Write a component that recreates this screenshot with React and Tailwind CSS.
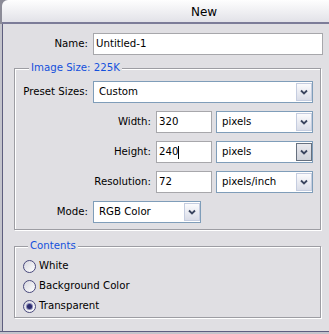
import React from 'react';

const Chevron = () => (
  <svg width="8" height="6" viewBox="0 0 8 6">
    <path d="M1 1.5 L4 4.5 L7 1.5" fill="none" stroke="#3b4660" strokeWidth="1.8" />
  </svg>
);

function Select({ width, value, pressed }) {
  return (
    <div className={`${width} h-[22px] flex border border-[#7f9db9] bg-white`}>
      <div className="flex-1 flex items-center pl-[5px] text-black">{value}</div>
      <div
        className={
          pressed
            ? 'w-[16px] my-[1px] flex items-center justify-center border border-[#66707f] bg-[linear-gradient(#e9e9ee,#cfd2da)]'
            : 'w-[16px] my-[1px] flex items-center justify-center border border-[#c5cde0] bg-[linear-gradient(#fbfbfd,#dadde8)]'
        }
      >
        <Chevron />
      </div>
    </div>
  );
}

function TextInput({ width, value, caret }) {
  return (
    <div className={`${width} h-[22px] flex items-center border border-[#a7a7ab] bg-white pl-[2px] text-black`}>
      {value}
      {caret && <span className="w-px h-[13px] bg-black" />}
    </div>
  );
}

function Radio({ label, checked }) {
  return (
    <div className="h-[20px] flex items-center pl-[8px]">
      <span className="w-[13px] h-[13px] rounded-full border border-[#48487c] bg-[linear-gradient(135deg,#d6d6de,#ffffff)] flex items-center justify-center">
        {checked && <span className="w-[5px] h-[5px] rounded-full bg-[#2b2b6e] shadow-[0_0_0_1px_#8a8ab8]" />}
      </span>
      <span className="ml-[3px] text-black">{label}</span>
    </div>
  );
}

function GroupBox({ title, titleLeft, className, children }) {
  return (
    <div
      className={`relative ml-[14px] w-[307px] border border-[#9d9da3] shadow-[inset_1px_1px_0_#ffffff,1px_1px_0_#ffffff] ${className}`}
    >
      <span className={`absolute top-[-7px] ${titleLeft} px-[2px] leading-[12px] bg-[#e0dfe3] text-[#1450dc]`}>
        {title}
      </span>
      {children}
    </div>
  );
}

export default function App() {
  return (
    <div className="w-[329px] h-[334px] overflow-hidden bg-[#8c8c98] font-['DejaVu_Sans',sans-serif] text-[10.2px]">
      <div className="ml-[2px] h-[24px] rounded-tl-[6px] border-b-2 border-[#7c7c98] bg-[linear-gradient(#fefefe,#e2e2e8)] flex items-center pl-[189px] pt-[2px]">
        <span className="text-[12px] text-black">New</span>
      </div>

      <div className="h-[307px] bg-[#e0dfe3] shadow-[inset_2px_0_0_#c4c4cc,inset_3px_0_0_#5e5e7e] pt-[9px]">
        <div className="flex items-center">
          <span className="w-[88px] text-right text-black">Name:</span>
          <div className="ml-[5px]">
            <TextInput width="w-[230px]" value="Untitled-1" />
          </div>
        </div>

        <GroupBox title="Image Size: 225K" titleLeft="left-[14px]" className="mt-[13px] pt-[12px] pb-[6px]">
          <div className="flex flex-col gap-[8px]">
            <div className="flex items-center">
              <span className="w-[73px] text-right text-black">Preset Sizes:</span>
              <div className="ml-[5px]">
                <Select width="w-[220px]" value="Custom" />
              </div>
            </div>
            <div className="flex items-center">
              <span className="w-[136px] text-right text-black">Width:</span>
              <div className="ml-[5px] flex gap-[4px]">
                <TextInput width="w-[56px]" value="320" />
                <Select width="w-[97px]" value="pixels" />
              </div>
            </div>
            <div className="flex items-center">
              <span className="w-[136px] text-right text-black">Height:</span>
              <div className="ml-[5px] flex gap-[4px]">
                <TextInput width="w-[56px]" value="240" caret />
                <Select width="w-[97px]" value="pixels" pressed />
              </div>
            </div>
            <div className="flex items-center">
              <span className="w-[136px] text-right text-black">Resolution:</span>
              <div className="ml-[5px] flex gap-[4px]">
                <TextInput width="w-[56px]" value="72" />
                <Select width="w-[97px]" value="pixels/inch" />
              </div>
            </div>
            <div className="flex items-center">
              <span className="w-[73px] text-right text-black">Mode:</span>
              <div className="ml-[5px]">
                <Select width="w-[108px]" value="RGB Color" />
              </div>
            </div>
          </div>
        </GroupBox>

        <GroupBox title="Contents" titleLeft="left-[13px]" className="mt-[16px] pt-[9px] pb-[1px]">
          <Radio label="White" />
          <Radio label="Background Color" />
          <Radio label="Transparent" checked />
        </GroupBox>
      </div>

      <div className="h-px bg-[#5e5e80]" />
      <div className="h-[2px] bg-[#c4c4cc]" />
    </div>
  );
}
